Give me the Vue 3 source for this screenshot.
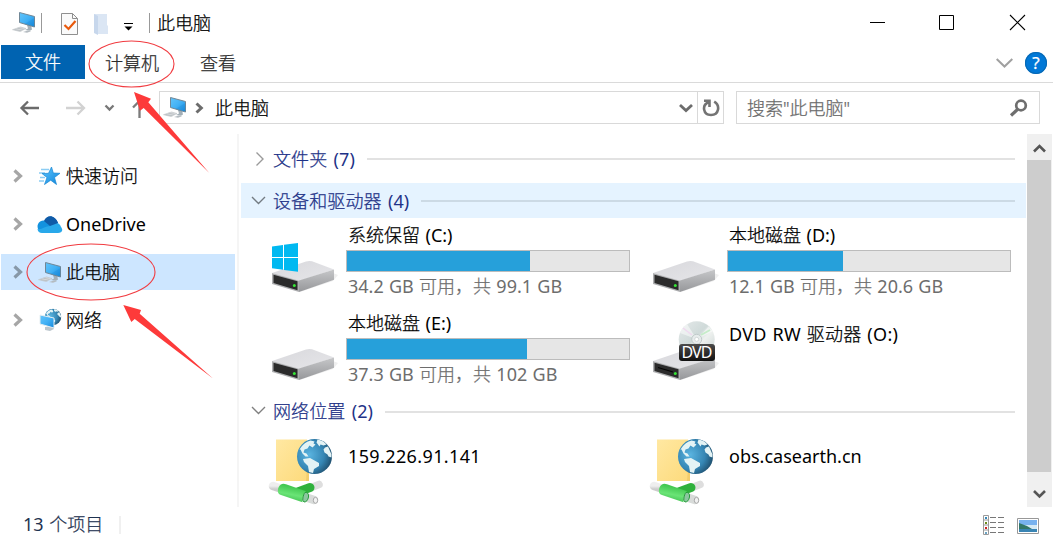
<script setup>
import { h } from 'vue'

// Splits text so that Latin and Chinese runs can carry their own weight.
const Mixed = (props) =>
  h(
    'span',
    { class: 'mixed' },
    props.text
      .split(/([\u0020-\u007e]+)/)
      .filter(Boolean)
      .map((run) => (/^[\u0020-\u007e]/.test(run) ? h('span', { class: 'latin' }, run) : run))
  )
Mixed.props = ['text']

const places = [
  { id: 'star', label: '快速访问' },
  { id: 'cloud', label: 'OneDrive' },
  { id: 'pc', label: '此电脑', selected: true },
  { id: 'net', label: '网络' }
]

const drives = [
  { name: '系统保留 (C:)', used: 64.9, info: '34.2 GB 可用，共 99.1 GB', windows: true },
  { name: '本地磁盘 (D:)', used: 40.8, info: '12.1 GB 可用，共 20.6 GB' },
  { name: '本地磁盘 (E:)', used: 63.8, info: '37.3 GB 可用，共 102 GB' },
  { name: 'DVD RW 驱动器 (O:)', dvd: true }
]

const locations = [
  { name: '159.226.91.141', numeric: true },
  { name: 'obs.casearth.cn' }
]
</script>

<template>
  <div class="window">
    <svg width="0" height="0" class="defs">
      <defs>
        <linearGradient id="screen" x1="0" y1="0" x2="1" y2="1">
          <stop offset="0" stop-color="#62c4fa" /><stop offset=".5" stop-color="#42b1f5" /><stop offset="1" stop-color="#1689dc" />
        </linearGradient>
        <linearGradient id="side" x1="0" y1="0" x2="0" y2="1">
          <stop offset="0" stop-color="#c6c7c9" /><stop offset="1" stop-color="#96979a" />
        </linearGradient>
        <linearGradient id="top" x1="0" y1="0" x2="1" y2="1">
          <stop offset="0" stop-color="#d8d8dc" /><stop offset="1" stop-color="#e6e6e9" />
        </linearGradient>
        <linearGradient id="badge" x1="0" y1="0" x2="0" y2="1">
          <stop offset="0" stop-color="#4b4b4b" /><stop offset="1" stop-color="#111" />
        </linearGradient>
        <linearGradient id="folder" x1="0" y1="0" x2="1" y2="1">
          <stop offset="0" stop-color="#ffe8a2" /><stop offset="1" stop-color="#fdda7b" />
        </linearGradient>
        <radialGradient id="globe" cx=".35" cy=".45" r=".7">
          <stop offset="0" stop-color="#5ab4e0" /><stop offset=".6" stop-color="#3586b4" /><stop offset="1" stop-color="#1c4865" />
        </radialGradient>
        <linearGradient id="disc" x1="0" y1="0" x2="1" y2="1">
          <stop offset="0" stop-color="#e6eaea" /><stop offset=".45" stop-color="#cfdad9" /><stop offset=".6" stop-color="#eef1ef" /><stop offset="1" stop-color="#c5d1d0" />
        </linearGradient>
        <linearGradient id="pipe" x1="0" y1="0" x2="-.3" y2="1">
          <stop offset="0" stop-color="#43c851" /><stop offset=".4" stop-color="#6ae476" /><stop offset="1" stop-color="#28a83a" />
        </linearGradient>
        <linearGradient id="grey" x1="0" y1="0" x2="0" y2="1">
          <stop offset="0" stop-color="#eeeeee" /><stop offset="1" stop-color="#cccccc" />
        </linearGradient>
        <linearGradient id="star" x1="0" y1="0" x2="1" y2="1">
          <stop offset="0" stop-color="#5cc6ff" /><stop offset="1" stop-color="#0f84da" />
        </linearGradient>
        <symbol id="pc" viewBox="0 0 24 24">
          <path d="M15 14l1 3.500-3 1.500 5 .8 2-1.300-1-4.500z" fill="#a3afb7" />
          <path d="M.5 18.700l8-2.700 5.500 1.500-6 3z" fill="#d9dbdd" stroke="#bcc1c5" stroke-width=".6" />
          <path d="M2.500 18.500l7 1.300M5.500 17.200l6 1.200" stroke="#a8b0b5" stroke-width=".6" />
          <path d="M11 21l5-1.500 3 .8-4 1.400z" fill="#b4bbc0" />
          <path d="M7.500 1.500l15 4v10.500l-15-4.500z" fill="url(#screen)" stroke="#718796" stroke-width="1" />
          <path d="M12.500 13l10-6v8.500z" fill="#147fce" opacity=".25" />
        </symbol>
        <symbol id="world" viewBox="0 0 36 36">
          <circle cx="18" cy="18" r="17.500" fill="url(#globe)" />
          <path d="M3 11Q7 4 14 2l4 1-1 2 2 1-3 3-3-2-2 3-3 1-1 3 3 1 2 3-3 0-3-3-2-4zM6.500 20.500l7-1 9 5 0 3-5 3-1 4-4-1-1-6-4-4zM21 1q6 1 9 5l-3 1-3-1-1 2-3-4zM28.500 9l3-1 3.500 8 0 3-3-1-1-2-3-2-1-3z" fill="#e3f3f5" />
        </symbol>
      </defs>
    </svg>

    <header class="titlebar">
      <svg class="pcicon"><use href="#pc" /></svg>
      <i class="vline v1"></i>
      <svg class="tcheck" width="18" height="23" viewBox="0 0 18 23"><path d="M.5 .5h11l5 5v16H.5z" fill="#fafafa" stroke="#8f8f8f" /><path d="M11.500 .5v5h5" fill="none" stroke="#8f8f8f" /><path d="M3.500 12l4 4 7-8" fill="none" stroke="#e8590c" stroke-width="2.200" /></svg>
      <svg class="tfolder" width="14" height="23" viewBox="0 0 14 23"><path d="M0 1h13v11l1 1v8H2v-1H0z" fill="#dbe6f4" /><path d="M0 1l4 2v19l-4-2z" fill="#c7d7ec" /></svg>
      <svg class="tdrop" width="10" height="9" viewBox="0 0 10 9"><path d="M0 1.500h9" stroke="#000" /><path d="M.5 4.500h8L4.500 8.500z" fill="#000" /></svg>
      <i class="vline v2"></i>
      <Mixed class="title" text="此电脑" />
      <div class="controls">
        <svg width="156" height="17" viewBox="0 0 156 17"><path d="M0 8.500h15M69.500 1.500h14v14h-14z" fill="none" stroke="#000" /><path d="M140 1l15 15M155 1l-15 15" stroke="#000" stroke-width="1.100" /></svg>
      </div>
    </header>

    <nav class="tabs">
      <span class="tab file">文件</span>
      <span class="tab computer">计算机</span>
      <span class="tab view">查看</span>
      <svg class="ribbon" width="17" height="10" viewBox="0 0 17 10"><path d="M.7 1l7.800 7.500L16.300 1" fill="none" stroke="#a0a0a0" stroke-width="2" /></svg>
      <span class="help">?</span>
    </nav>

    <div class="address">
      <svg class="navs" width="130" height="26" viewBox="0 0 130 26">
        <g fill="none" stroke-width="2.300">
          <path d="M21 13H3.500M10 6.500L3.500 13l6.500 6.500" stroke="#6b6b6b" />
          <path d="M48 13h18M59.500 6.500L66 13l-6.500 6.500" stroke="#d2d2d2" />
          <path d="M87.500 10.500l4 4 4-4" stroke="#787878" />
          <path d="M121.500 23V6M115 12.500l6.500-6.500 6.500 6.500" stroke="#7b7b7b" />
        </g>
      </svg>
      <div class="path">
        <svg class="pcicon apc"><use href="#pc" /></svg>
        <svg class="sep" width="9" height="12" viewBox="0 0 9 12"><path d="M1.500 1.500L6.300 6l-4.800 4.500" fill="none" stroke="#6c6c6c" stroke-width="3" /></svg>
        <span class="here">此电脑</span>
        <svg class="pdrop" width="14" height="10" viewBox="0 0 14 10"><path d="M1 2l6 5.500L13 2" fill="none" stroke="#6c6c6c" stroke-width="2.800" /></svg>
        <div class="refresh"><svg width="18" height="18" viewBox="0 0 18 18"><path d="M2 1.800h5.500V8M6.700 3.200C-.5 6 1 16 9 16c8 0 9.500-9.500 3.200-13.300" fill="none" stroke="#747474" stroke-width="2.600" /></svg></div>
      </div>
      <div class="search">
        <span>搜索"此电脑"</span>
        <svg width="19" height="18" viewBox="0 0 19 18"><circle cx="12" cy="6.500" r="4.800" fill="none" stroke="#6e6e6e" stroke-width="2.700" /><path d="M8.500 10.500l-6.500 6" stroke="#6e6e6e" stroke-width="3.200" /></svg>
      </div>
    </div>

    <main class="body">
      <aside class="sidebar">
        <div v-for="p in places" :key="p.id" class="place" :class="{ selected: p.selected }">
          <svg class="chev" width="10" height="14" viewBox="0 0 10 14"><path d="M1.500 1.500L7.500 7l-6 5.500" fill="none" :stroke="p.selected ? '#8798a8' : '#a6a6a6'" stroke-width="3.200" /></svg>
          <svg class="picon" width="28" height="26" viewBox="0 0 28 26">
            <g v-if="p.id === 'star'">
              <path d="M6 6.500h8M4 10h6M5 14.500h5M4 18h5" stroke="#8ccdf4" stroke-width="1.300" />
              <path d="M16.500 4l1.800 6 6.700.3-5.500 4.200 2 7-5.800-4.300L9.500 21.500l2.500-7-5-4 6.500-.2z" fill="url(#star)" stroke="#1987d2" stroke-width=".7" />
            </g>
            <g v-else-if="p.id === 'cloud'">
              <path d="M9 11C12 3 20 4 23 12l-9 4z" fill="#0763b6" />
              <path d="M3 18C1 12 6 8 11 10l11 8-16 3z" fill="#1392df" />
              <path d="M15 15c2-5 10-4 11 1 3 4 0 6-3 6H7q-4 0-4.500-4c4 1 8-3 12.500-3z" fill="#28a8ea" />
              <path d="M9 10l6 5 8-3C20 4 12 3 9 10z" fill="#0f5ba8" />
            </g>
            <use v-else-if="p.id === 'pc'" href="#pc" x="3" y="2" width="24" height="24" />
            <g v-else>
              <use href="#world" x="9.500" y="1.500" width="17" height="17" />
              <path d="M10 20l8-1 1 3-4 2-5-1z" fill="#bbc6cd" />
              <path d="M5 8l14 3v10L5 17z" fill="url(#screen)" stroke="#e6eef2" stroke-width="1" />
            </g>
          </svg>
          <Mixed :text="p.label" />
        </div>
      </aside>

      <section class="content">
        <div class="group folders">
          <svg width="10" height="16" viewBox="0 0 10 16"><path d="M1.500 1.500L8 8l-6.500 6.500" fill="none" stroke="#9a9a9a" stroke-width="1.400" /></svg>
          <Mixed text="文件夹 (7)" /><hr />
        </div>
        <div class="group devices">
          <svg width="15" height="10" viewBox="0 0 15 10"><path d="M1 1L7.500 7.500 14 1" fill="none" stroke="#737b82" stroke-width="1.400" /></svg>
          <Mixed text="设备和驱动器 (4)" /><hr />
        </div>
        <div class="grid">
          <div v-for="d in drives" :key="d.name" class="item">
            <svg class="icon" width="76" height="88" viewBox="0 0 76 88">
              <path d="M32 74l33-11 5-6-5-2z" fill="#efefef" />
              <path d="M4 55L38 43.500q3-1 6-.2L66 51.500 31 63z" fill="url(#top)" />
              <path d="M31 62.500L66 51.500v10.300L31 74z" fill="url(#side)" />
              <path d="M4 55l27 7.700V74L4 66z" fill="#aeafb1" />
              <path d="M5.500 56.800l24 6.500v9L5.500 65z" fill="#2b2b2b" />
              <circle cx="26.300" cy="67.500" r="1.500" fill="#35e535" />
              <g v-if="d.windows" fill="#00b9f1">
                <path d="M4 28.500l11-1.600v12H4zM16 26.800L30 25v13.900H16zM4 40h11v11.800L4 50.300zM16 40h14v13.800L16 52z" />
              </g>
              <g v-if="d.dvd">
                <path d="M9 61.500l15 4.500" stroke="#050505" stroke-width="1.300" />
                <circle cx="47.700" cy="33.300" r="18" fill="url(#disc)" />
                <path d="M47.700 33.300L31 27q2-6 7-9zM47.700 33.300l12-13 4 5z" fill="#fff" opacity=".5" />
                <path d="M52 29l9-5" stroke="#c6ecc9" stroke-width="2" /><path d="M34 22l9 7" stroke="#efd9ef" stroke-width="1.500" />
                <circle cx="47.700" cy="33.300" r="5" fill="#e7ecec" stroke="#c0caca" />
                <circle cx="47.700" cy="33.300" r="2" fill="#fff" stroke="#c4cccc" stroke-width=".7" />
                <rect x="30" y="38" width="36" height="17" rx="3" fill="url(#badge)" />
                <text x="48" y="52" text-anchor="middle" textLength="31" class="dvd">DVD</text>
              </g>
            </svg>
            <div class="info" :class="{ plain: d.dvd, optical: d.dvd }">
              <div class="name"><Mixed :text="d.name" /></div>
              <template v-if="!d.dvd">
                <div class="bar"><div class="fill" :style="{ width: d.used + '%' }"></div></div>
                <div class="sub"><Mixed :text="d.info" /></div>
              </template>
            </div>
          </div>
        </div>
        <div class="group network">
          <svg width="15" height="10" viewBox="0 0 15 10"><path d="M1 1L7.500 7.500 14 1" fill="none" stroke="#808080" stroke-width="1.400" /></svg>
          <Mixed text="网络位置 (2)" /><hr />
        </div>
        <div class="grid nets">
          <div v-for="l in locations" :key="l.name" class="item">
            <svg class="icon" width="76" height="79" viewBox="0 0 76 79">
              <path d="M8 11.500h31V51l2 1.500v.5H8z" fill="url(#folder)" />
              <path d="M39 40l2 2v11h-3z" fill="#f3cd6c" />
              <use href="#world" x="28.500" y="10.500" width="36" height="36" />
              <path d="M5 58l9 3" stroke="url(#grey)" stroke-width="8.500" stroke-linecap="round" />
              <path d="M42 60l9-3.500" stroke="#dedede" stroke-width="7.500" stroke-linecap="round" />
              <path d="M27 65l15-5.500" stroke="#2fb13c" stroke-width="9" stroke-linecap="round" />
              <path d="M37 69l9 3" stroke="#d8dbd9" stroke-width="8.500" stroke-linecap="round" />
              <path d="M14 56q2-.5 4 .3l20 7q-4 3-3.500 11L13 67q-4-1-3-6 1-4 4-5z" fill="url(#pipe)" />
              <path d="M37 64.500q4-.5 3.500 4.500-1 5-4.500 5-2-1-1-5 1-4 2-4.500z" fill="#8cc6a0" stroke="#279e3b" />
              <ellipse cx="47.500" cy="72.300" rx="2.200" ry="3" fill="#f2f2f2" stroke="#aaa" stroke-width="1" />
            </svg>
            <div class="info plain" :class="{ numeric: l.numeric }"><div class="name"><Mixed :text="l.name" /></div></div>
          </div>
        </div>
      </section>

      <div class="scroll">
        <svg width="25" height="26" viewBox="0 0 25 26"><path d="M7 17.500l5.500-5.500 5.500 5.500" fill="none" stroke="#555" stroke-width="2.600" /></svg>
        <div class="thumb"></div>
        <svg width="25" height="35" viewBox="0 0 25 35"><path d="M7 19l5.500 5.500L18 19" fill="none" stroke="#555" stroke-width="2.600" /></svg>
      </div>
    </main>

    <footer class="status">
      <Mixed class="count" text="13 个项目" /><i></i>
      <svg width="58" height="22" viewBox="0 0 58 22">
        <path d="M1.500 1.500h5v19h-5zM1 6h6M1 11h6M1 16h6" fill="none" stroke="#9a9a9a" />
        <path d="M8 3.500h6M16 3.500h6M8 8.500h6M16 8.500h6M8 13.500h6M16 13.500h6M8 18.500h6M16 18.500h6" stroke="#777" />
        <path d="M3 3h2v2H3z" fill="#3587b8" /><path d="M3 8h2v2H3z" fill="#6d8c1f" /><path d="M3 13h2v2H3z" fill="#c22" /><path d="M3 18h2v2H3z" fill="#6da4c3" />
        <path d="M35.500 4.500h21v15h-21z" fill="#fff" stroke="#989898" />
        <path d="M37 6h18v12H37z" fill="#77b1ee" /><path d="M37 11h18v4H37z" fill="#d5e9f4" /><path d="M37 9l8 3 5 3H37z" fill="#337768" /><path d="M37 15h18v3H37z" fill="#3984b3" />
      </svg>
    </footer>

    <svg class="marks" width="1053" height="543" viewBox="0 0 1053 543">
      <g fill="none" stroke="#f13b40" stroke-width="1.100"><ellipse cx="131.500" cy="64" rx="42.500" ry="23" /><ellipse cx="91" cy="272" rx="64" ry="28" /></g>
      <path d="M134 92l17 6.700-2.700 3.600 61 70.700-65.600-65-3.700 2.700zM123.300 305l17.700 5-1.300 3.700 73.300 64.800-78.300-59.500-3.400 3z" fill="#fd3a3a" />
    </svg>
  </div>
</template>

<style>
body { margin: 0; background: #fff; }
.mixed { white-space: pre; }
.mixed .latin { font-weight: 400; -webkit-text-stroke: 0; }
</style>

<style scoped>
.window { position: relative; width: 1053px; height: 543px; overflow: hidden; display: flex; flex-direction: column; background: #fff; color: #000; font: 300 18px/26px "Noto Sans", "Noto Sans CJK SC", sans-serif; word-spacing: .6px; -webkit-text-stroke: .25px; }
svg { display: block; flex: none; }
.defs { position: absolute; }
.titlebar { height: 45px; display: flex; align-items: center; box-sizing: border-box; padding-left: 12px; }
.pcicon { width: 24px; height: 24px; }
.vline { width: 1px; height: 20px; background: #999; flex: none; }
.v1 { margin-left: 5px; }
.tcheck { margin-left: 19px; margin-top: 3px; }
.tfolder { margin-left: 15px; margin-top: 3px; }
.tdrop { margin-left: 16px; margin-top: 7px; }
.v2 { margin-left: 15px; }
.title { margin-left: 7px; }
.controls { margin-left: auto; margin-right: 27px; }
.tabs { height: 37px; display: flex; border-bottom: 1px solid #dadada; padding-left: 1px; }
.tab { line-height: 35px; height: 34px; color: #2b2b2b; }
.file { width: 84px; text-align: center; background: #0063b1; color: #fff; }
.computer { margin-left: 20px; line-height: 37px; }
.view { margin-left: 41px; line-height: 37px; }
.ribbon { margin: 13px 12px 0 auto; }
.help { width: 22px; height: 22px; margin: 7px 6px 0 0; border-radius: 50%; background: #0078d7; color: #fff; text-align: center; font-size: 17px; font-weight: 400; line-height: 22px; box-shadow: inset 0 0 0 1px #0869b4; }
.address { height: 51px; box-sizing: border-box; display: flex; padding: 8px 0 0 18px; }
.navs { margin-top: 4px; }
.path { margin-left: 11px; width: 565px; height: 33px; box-sizing: border-box; border: 1px solid #d9d9d9; display: flex; align-items: center; }
.apc { margin-left: 3px; }
.sep { margin-left: 8px; }
.here { margin-left: 11px; }
.pdrop { margin-left: auto; margin-right: 4px; }
.refresh { width: 26px; height: 31px; border-left: 1px solid #d9d9d9; display: flex; align-items: center; justify-content: center; padding-left: 1px; box-sizing: border-box; }
.search { margin-left: 12px; width: 304px; height: 33px; box-sizing: border-box; border: 1px solid #d9d9d9; display: flex; align-items: center; justify-content: space-between; padding: 0 11px 0 10px; color: #6a6a6a; }
.body { height: 373px; display: flex; }
.sidebar { width: 239px; box-sizing: border-box; padding: 24px 2px 0 1px; border-right: 2px solid #f5f5f5; }
.place { height: 36px; margin-bottom: 12px; display: flex; align-items: center; padding-left: 12px; width: 222px; }
.selected { background: #cde6ff; }
.picon { margin: 0 3px 0 12px; }
.content { width: 787px; padding-left: 2px; box-sizing: border-box; }
.group { display: flex; align-items: center; color: #1e3287; height: 35px; letter-spacing: .1px; word-spacing: 1.5px; }
.group hr { flex: 1; border: 0; height: 2px; background: #e2e2e2; margin: 1px 11px 0 12px; }
.folders { height: 49px; padding-left: 14px; }
.folders svg { margin-right: 8px; }
.devices, .network { padding-left: 10px; }
.devices { background: #e5f3ff; }
.devices hr { background: #ccdae5; }
.devices svg, .network svg { margin-right: 7px; }
.network { height: 34px; }
.grid { display: grid; grid-template-columns: 381px 381px; grid-auto-rows: 88px; padding-left: 27px; }
.item { display: flex; }
.info { width: 284px; padding-top: 4px; margin-left: 2px; }
.name { height: 28px; line-height: 27px; padding-left: 2px; word-spacing: .8px; }
.optical .name { letter-spacing: .28px; }
.numeric { letter-spacing: .38px; }
.plain { padding-top: 15px; }
.bar { height: 22px; box-sizing: border-box; border: 1px solid #bcbcbc; background: #e6e6e6; }
.fill { height: 100%; background: #26a0da; }
.sub { padding-left: 2px; height: 28px; line-height: 28px; color: #6d6d6d; }
.dvd { font: 400 16px "Noto Sans", sans-serif; fill: #fff; -webkit-text-stroke: 0; }
.nets { grid-auto-rows: 79px; }
.scroll { margin-left: 1px; width: 25px; background: #f0f0f0; display: flex; flex-direction: column; }
.thumb { flex: 1; background: #cdcdcd; width: 24px; }
.status { height: 36px; display: flex; align-items: center; padding: 0 13px 0 23px; color: #1e3250; word-spacing: 1px; }
.count { margin-top: -2px; }
.status i { width: 2px; height: 18px; background: #f0f0f0; margin-left: 16px; }
.status svg { margin-left: auto; margin-top: -1px; }
.marks { position: absolute; inset: 0; pointer-events: none; }
</style>
